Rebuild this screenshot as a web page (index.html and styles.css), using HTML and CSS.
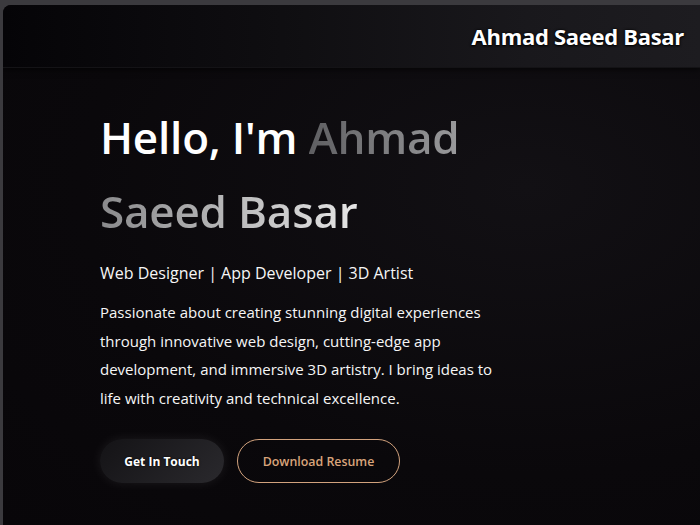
FILE: index.html
```html
<!DOCTYPE html>
<html>
<head>
<meta charset="utf-8">
<link rel="stylesheet" href="styles.css">
</head>
<body>
<div class="window">
  <header class="topbar">
    <div class="brand">Ahmad Saeed Basar</div>
  </header>
  <main class="hero">
    <h1 class="title">Hello, I'm <span class="grad1">Ahmad</span><br><span class="grad2">Saeed Basar</span></h1>
    <p class="roles">Web Designer | App Developer | 3D Artist</p>
    <p class="bio">Passionate about creating stunning digital experiences through innovative web design, cutting-edge app development, and immersive 3D artistry. I bring ideas to life with creativity and technical excellence.</p>
    <div class="actions">
      <a class="btn btn-dark">Get In Touch</a>
      <a class="btn btn-outline">Download Resume</a>
    </div>
  </main>
</div>
</body>
</html>
```
FILE: styles.css
```css
* { box-sizing: border-box; }
html, body { margin: 0; padding: 0; }
body {
  background: #3b3a3e;
  font-family: "Open Sans", "Noto Sans", sans-serif;
  width: 700px;
  height: 525px;
  overflow: hidden;
}
.window {
  margin: 5px 0 0 3px;
  height: 520px;
  border-top-left-radius: 8px;
  overflow: hidden;
  background: radial-gradient(ellipse at 75% 35%, #121014 0%, #0a080b 60%, #080609 100%);
}
.topbar {
  height: 63px;
  display: flex;
  justify-content: flex-end;
  align-items: center;
  padding-right: 16px;
  background: linear-gradient(90deg, #050407 0%, #0f0e11 40%, #19181c 75%, #1d1c20 100%);
  box-shadow: 0 2px 6px rgba(0,0,0,0.6);
  border-bottom: 1px solid #141316;
}
.brand {
  color: #ffffff;
  font-size: 22px;
  font-weight: 700;
  letter-spacing: -0.3px;
  text-shadow: 0 0 3px #000, 0 1px 2px #000;
}
.hero {
  padding: 32px 0 0 97px;
  color: #f2f2f2;
}
.title {
  margin: 0;
  font-size: 44px;
  font-weight: 600;
  line-height: 74px;
  color: #ffffff;
  letter-spacing: -0.2px;
}
.grad1 {
  background: linear-gradient(90deg, #5f5f62 0%, #9a9a9c 100%);
  -webkit-background-clip: text;
  background-clip: text;
  color: transparent;
}
.grad2 {
  background: linear-gradient(90deg, #8a8a8c 0%, #e6e6e6 100%);
  -webkit-background-clip: text;
  background-clip: text;
  color: transparent;
}
.roles {
  margin: 14px 0 0 0;
  font-size: 16px;
  color: #f6f6f6;
}
.bio {
  margin: 14px 0 0 0;
  width: 400px;
  font-size: 15px;
  line-height: 28.5px;
  color: #f6f6f6;
}
.actions {
  display: flex;
  gap: 13px;
  margin-top: 27px;
}
.btn {
  height: 44px;
  border-radius: 22px;
  display: flex;
  align-items: center;
  justify-content: center;
  font-size: 12.4px;
  font-weight: 600;
}
.btn-dark {
  width: 124px;
  background: linear-gradient(135deg, #141316 0%, #2a292d 100%);
  color: #fff;
  font-size: 12px;
  font-weight: 700;
  box-shadow: 0 0 12px rgba(255,255,255,0.08);
  text-shadow: 0 0 2px #000;
}
.btn-outline {
  width: 163px;
  border: 1.5px solid #d2a27d;
  color: #d9a47b;
}
```
